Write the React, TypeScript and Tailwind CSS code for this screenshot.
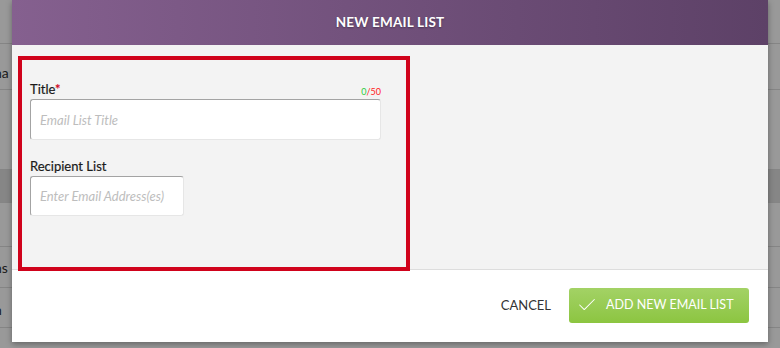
import { Check } from 'lucide-react';

const bgRows = [
  { h: 'h-[44px]', text: '' },
  { h: 'h-[46px]', text: 'na', pad: 'pt-[12px]' },
  { h: 'h-[80px]', text: '' },
  { h: 'h-[33px]', text: '', dark: true },
  { h: 'h-[44px]', text: '' },
  { h: 'h-[41px]', text: 'ns' },
  { h: 'h-[40px]', text: 'n', pad: 'pt-[4px]' },
];

export default function App() {
  return (
    <div className="relative w-[780px] h-[348px] overflow-hidden bg-[#999999] font-['Lato','Liberation_Sans',sans-serif]">
      {/* Page behind the dimmed overlay */}
      <div className="flex flex-col">
        {bgRows.map((row, i) => (
          <div
            key={i}
            className={`${row.h} ${row.pad ?? ''} flex items-center border-b border-[#858585] text-[14px] text-[#1a1a1a] ${
              row.dark ? 'bg-[#868686]' : ''
            }`}
          >
            <span className="-ml-[6px]">{row.text}</span>
          </div>
        ))}
      </div>

      {/* Modal */}
      <div className="absolute left-[12px] top-0 w-[756px] shadow-[0_2px_6px_rgba(0,0,0,0.35)]">
        <div className="h-[45px] flex items-center justify-center bg-gradient-to-r from-[#85608f] to-[#5d4167]">
          <h1 className="text-[13.5px] font-bold text-white tracking-[0.2px] [text-shadow:0_1px_2px_rgba(0,0,0,0.35)]">
            NEW EMAIL LIST
          </h1>
        </div>

        <div className="h-[224px] bg-[#f3f3f3] pt-[11px] pl-[6px]">
          <div className="relative z-10 w-[392px] h-[215px] border-4 border-[#d0021b] pl-[8px] pt-[20px]">
            <div className="w-[351px]">
              <div className="flex items-end justify-between">
                <label className="text-[13px] text-[#1a1a1a] leading-[18px] [-webkit-text-stroke:0.2px_#1a1a1a]">
                  Title
                  <span className="text-[#d0021b] [-webkit-text-stroke:0.2px_#d0021b]">*</span>
                </label>
                <span className="text-[9px] leading-[11px] mb-[1px]">
                  <span className="text-[#2ecc40]">0</span>
                  <span className="text-[#ff1a1a]">/50</span>
                </span>
              </div>
              <input
                placeholder="Email List Title"
                className="mt-[1px] w-[351px] h-[41px] rounded-[3px] bg-white border border-[#e6e6e6] border-t-[#a3a3a3] border-l-[#a3a3a3] px-[9px] text-[13px] italic placeholder:text-[#bdbdbd] outline-none"
              />
            </div>

            <label className="block mt-[17px] text-[13px] text-[#1a1a1a] leading-[18px] [-webkit-text-stroke:0.2px_#1a1a1a]">
              Recipient List
            </label>
            <input
              placeholder="Enter Email Address(es)"
              className="mt-[1px] w-[154px] h-[40px] rounded-[3px] bg-white border border-[#e6e6e6] border-t-[#a3a3a3] border-l-[#a3a3a3] px-[9px] text-[13px] italic placeholder:text-[#bdbdbd] outline-none"
            />
          </div>
        </div>

        <div className="h-[73px] bg-white border-t border-[#dddddd] flex items-center justify-end pr-[19px]">
          <button className="text-[13px] text-[#333] mr-[18px]">CANCEL</button>
          <button className="w-[180px] h-[35px] mb-[2px] rounded-[3px] bg-gradient-to-b from-[#a3d265] to-[#8cc540] flex items-center pl-[7px] text-white text-[12.5px]">
            <Check className="w-[22px] h-[22px] mr-[8px]" strokeWidth={1.1} />
            ADD NEW EMAIL LIST
          </button>
        </div>
      </div>
    </div>
  );
}
